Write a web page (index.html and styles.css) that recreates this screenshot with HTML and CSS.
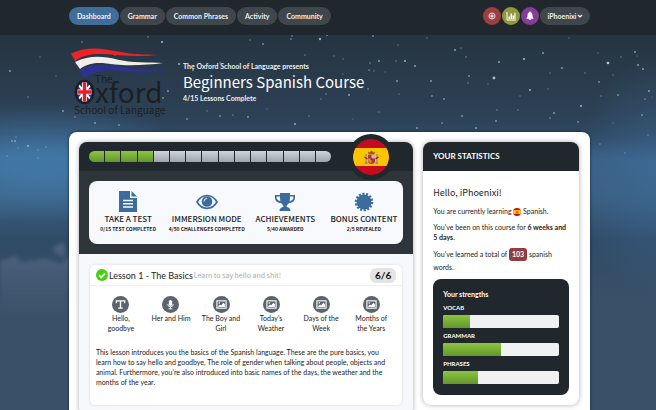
FILE: index.html
```html
<!DOCTYPE html>
<html lang="en">
<head>
<meta charset="utf-8">
<title>Beginners Spanish Course</title>
<link rel="stylesheet" href="styles.css">
</head>
<body>
<svg class="defs" width="0" height="0" aria-hidden="true">
  <symbol id="i-image" viewBox="0 0 12 12"><rect x="1" y="2" width="10" height="8" fill="none" stroke="#fff" stroke-width="1.2"/><circle cx="3.600" cy="4.400" r=".9" fill="#fff"/><path d="M2.500 8.800V7.500L4.500 6l1 1 2.600-2.800 1.600 1.500v3.100z" fill="#fff"/></symbol>
  <symbol id="i-spain" viewBox="0 0 36 36"><circle cx="18" cy="18" r="18" fill="#c60b1e"/><path d="M2.400 9h31.200a18 18 0 0 1 0 18H2.400a18 18 0 0 1 0-18z" fill="#ffc400"/><path d="M15 16h7v5.500a3.500 3.500 0 0 1-7 0z" fill="#b5303a"/><path d="M18.500 16H22v3.500h-3.500z" fill="#d9b0a8"/><path d="M15 19.500h3.500V24A3.500 3.500 0 0 1 15 21z" fill="#d88a2a"/><path d="M15 12.500l1.500 1 2-2 2 2 1.500-1-.6 3h-5.800z" fill="#a8502a"/><path d="M12.500 15h1.300v8.500h-1.300zM23.200 15h1.300v8.500h-1.300z" fill="#8f8f98"/><path d="M11.500 18l3 2M25.500 18l-3 2" stroke="#aa151b" stroke-width="1.200"/><circle cx="18.500" cy="20" r="1.100" fill="#2d4f94"/><path d="M11.800 24h2.700M22.500 24h2.700" stroke="#4a6a8a"/></symbol>
</svg>
<header class="topbar">
  <div class="wrap topbar-row">
    <nav class="nav">
      <a class="pill active" href="#">Dashboard</a>
      <a class="pill" href="#">Grammar</a>
      <a class="pill" href="#">Common Phrases</a>
      <a class="pill" href="#">Activity</a>
      <a class="pill" href="#">Community</a>
    </nav>
    <div class="tools">
      <button class="round red" aria-label="Goals"><svg viewBox="0 0 18 18"><circle cx="9" cy="9" r="3" fill="none" stroke="#f3e4e4" stroke-width="1"/><circle cx="9" cy="9" r="1.600" fill="#f3e4e4"/></svg></button>
      <button class="round olive" aria-label="Statistics"><svg viewBox="0 0 18 18"><path d="M5 5v8h9" fill="none" stroke="#fff"/><path d="M6.500 12V9.500H8V12zM8.500 12V6.500H10V12zM10.500 12V8.500H12V12zM12.300 12V5.800h1.200V12z" fill="#fff"/></svg></button>
      <button class="round purple" aria-label="Notifications"><svg viewBox="0 0 18 18"><path d="M9 5c2 .3 2.500 1.800 2.500 3.500 0 1.500.5 2.300 1.300 3.300H5.200c.8-1 1.300-1.800 1.300-3.300C6.500 6.800 7 5.300 9 5z" fill="#fff"/><path d="M9 4.500v2M7.800 12.200h2.400" stroke="#fff" stroke-width="1.200"/></svg></button>
      <button class="pill user">iPhoenixi<svg viewBox="0 0 6 6"><path d="M1 2l2 2 2-2" fill="none" stroke="#fff" stroke-width="1.200"/></svg></button>
    </div>
  </div>
</header>
<div class="sky">
  <svg class="clouds" viewBox="0 0 100 80" preserveAspectRatio="none" aria-hidden="true">
    <defs><linearGradient id="fade" x1="0" y1="0" x2="0" y2="1"><stop offset="0" stop-color="#566b84" stop-opacity=".75"/><stop offset=".9" stop-color="#566b84" stop-opacity="0"/></linearGradient></defs>
    <path d="M-5 24C2 20 5 24 8 21s10-4 12 2c5 3 9-2 15 0 6-3 15-2 19 0 5 0 6 5 10 1 5-5 16-10 40-12v68H-5z" fill="url(#fade)"/>
    <path d="M54 13c0-3 6-6 12-6v11c-6 2-9-2-12-5z" fill="#566b84" opacity=".7"/>
  </svg>
  <svg class="stars" id="stars" aria-hidden="true"></svg>
  <section class="wrap hero">
    <svg class="logo" viewBox="0 0 100 74" role="img" aria-label="The Oxford School of Language">
      <path d="M1 6.500C16-1 32 1 48 4.500S76 7 88 8C74 9.500 60 9 46 8 30 6.500 16 6 5 14z" fill="#ee2328"/>
      <path d="M5 15c14-7 28-6 42-2.500S80 15 93 16c-14 2-34 3-48 1.500S22 14 10 22z" fill="#efeeea"/>
      <path d="M9 23c11-5.500 25-6 39-3.500s34 4 48 3.800c-16 2.700-34 2.700-47 .7s-25 0-34.500 7z" fill="#2e3192"/>
      <text x="25" y="36" font-size="10">The</text>
      <ellipse cx="14.500" cy="45" rx="8.300" ry="10.500" fill="#fff" stroke="#1d1e22" stroke-width="3.400"/>
      <clipPath id="oval"><ellipse cx="14.500" cy="45" rx="7.300" ry="10"/></clipPath>
      <g clip-path="url(#oval)"><path d="M6 34h7v9H6zM16 34h8v9h-8zM6 47h7v9H6zM16 47h8v9h-8z" fill="#2b3990"/><path d="M6 35l17 20M23 35L6 55" stroke="#fff" stroke-width="2"/><path d="M14.500 34v22M5 45h19" stroke="#fff" stroke-width="5"/><path d="M14.500 34v22M5 45h19" stroke="#ed1c24" stroke-width="3.400"/></g>
      <text x="25" y="56" font-size="28">xford</text>
      <text x="4" y="67" font-size="10">School of Language</text>
    </svg>
    <div class="intro">
      <p class="kicker">The Oxford School of Language presents</p>
      <h1>Beginners Spanish Course</h1>
      <p class="kicker">4/15 Lessons Complete</p>
    </div>
  </section>
  <main class="wrap sheet">
    <section class="course card">
      <div class="course-head">
        <div class="steps" role="img" aria-label="4 of 15 lessons complete"><i class="on"></i><i class="on"></i><i class="on"></i><i class="on"></i><i></i><i></i><i></i><i></i><i></i><i></i><i></i><i></i><i></i><i></i><i></i></div>
        <svg class="flag" viewBox="0 0 36 36" role="img" aria-label="Spain"><use href="#i-spain"/></svg>
      </div>
      <div class="course-actions">
        <div class="actions">
          <a href="#"><svg viewBox="0 0 22 22"><path d="M2 0h11v7h7v14H2z"/><path d="M14.500 0L20 5.500h-5.500z"/><path d="M6 9.500h10M6 12.700h10M6 16h10" stroke="#f7f9fc" stroke-width="1.400"/></svg><b>TAKE A TEST</b><small>0/15 TEST COMPLETED</small></a>
          <a href="#"><svg viewBox="0 0 22 22"><path d="M1 11C6 2.300 16 2.300 21 11 16 19.500 6 19.500 1 11z" fill="none" stroke="#3c6c9e" stroke-width="1.700"/><circle cx="11" cy="10.500" r="5.300"/><path d="M8 10.500A3 3 0 0 1 11 7.500" fill="none" stroke="#f7f9fc"/></svg><b>IMMERSION MODE</b><small>4/50 CHALLENGES COMPLETED</small></a>
          <a href="#"><svg viewBox="0 0 22 22"><path d="M6 2h10v2h5v3c0 3-3 5-6 5-1 1.500-2.500 2-2.500 4 1.500 0 4 1 4 4h-11c0-3 2.500-4 4-4 0-2-1.500-2.500-2.500-4-3 0-6-2-6-5V4h5zM6 5.500H2.600V7c0 1.500 2 3 4 3.300C6 8.800 6 7 6 5.500zm10 0c0 1.500 0 3.300-.6 4.800 2-.3 4-1.800 4-3.300V5.500z" fill-rule="evenodd"/></svg><b>ACHIEVEMENTS</b><small>5/40 AWARDED</small></a>
          <a href="#"><svg viewBox="0 0 22 22"><circle cx="11" cy="11" r="7.500"/><circle cx="11" cy="11" r="8" fill="none" stroke="#3c6c9e" stroke-width="2.600" stroke-dasharray="2 1.590"/></svg><b>BONUS CONTENT</b><small>2/5 REVEALED</small></a>
        </div>
      </div>
      <div class="course-body">
        <article class="lesson">
          <header>
            <svg class="tick" viewBox="0 0 12 12"><circle cx="6" cy="6" r="6" fill="#45cf0c"/><path d="M3 6.200l2.200 2.200 3.900-4" fill="none" stroke="#fff" stroke-width="1.800"/></svg>
            <h2>Lesson 1 - The Basics</h2>
            <span class="sub">Learn to say hello and shit!</span>
            <span class="count">6/6</span>
          </header>
          <ul class="topics">
            <li><span class="dot"><svg viewBox="0 0 12 12"><path d="M1.500 4.500V2h9v2.500M6 2v7.500M3.500 10h5" fill="none" stroke="#fff" stroke-width="1.500"/></svg></span>Hello, goodbye</li>
            <li><span class="dot"><svg viewBox="0 0 12 12"><rect x="4.200" y="1" width="3.600" height="6.500" rx="1.800" fill="#fff"/><path d="M3 5.500a3 3 0 0 0 6 0M6 8.500v2M4 10.700h4" fill="none" stroke="#fff"/></svg></span>Her and Him</li>
            <li><span class="dot"><svg><use href="#i-image"/></svg></span>The Boy and Girl</li>
            <li><span class="dot"><svg><use href="#i-image"/></svg></span>Today's Weather</li>
            <li><span class="dot"><svg><use href="#i-image"/></svg></span>Days of the Week</li>
            <li><span class="dot"><svg><use href="#i-image"/></svg></span>Months of the Years</li>
          </ul>
          <p>This lesson introduces you the basics of the Spanish language. These are the pure basics, you learn how to say hello and goodbye, The role of gender when talking about people, objects and animal. Furthermore, you're also introduced into basic names of the days, the weather and the months of the year.</p>
        </article>
      </div>
    </section>
    <aside class="stats card">
      <h2>YOUR STATISTICS</h2>
      <div class="stats-body">
        <h3>Hello, iPhoenixi!</h3>
        <p>You are currently learning <svg class="mini" viewBox="0 0 36 36"><use href="#i-spain"/></svg> Spanish.</p>
        <p>You've been on this course for <strong>6 weeks and 5 days</strong>.</p>
        <p class="words">You've learned a total of <span class="badge">103</span> spanish words.</p>
        <div class="strengths">
          <h4>Your strengths</h4>
          <h5>VOCAB</h5><div class="bar"><i style="width:23%"></i></div>
          <h5>GRAMMAR</h5><div class="bar"><i style="width:50%"></i></div>
          <h5>PHRASES</h5><div class="bar"><i style="width:30%"></i></div>
        </div>
      </div>
    </aside>
  </main>
</div>
<script src="stars.js"></script>
</body>
</html>
```
FILE: stars.js
```js
// Each star is x, y, radius, opacity.
const stars = [
  [373,35,1,.6],[455,49,1,.8],[461,47,.8,.5],[379,60,1,.8],[396,60,.8,.6],[405,60,1.200,.8],[415,65,1,.8],[466,56,.8,.7],
  [499,61,1,.8],[524,58,1.200,.9],[543,52,1,.8],[608,62,1.500,1],[621,56,.9,.6],[635,51,1,.7],[638,64,1,.8],[643,68,1,.8],
  [562,67,1,.7],[494,77,1.600,.9],[530,89,1.200,.8],[469,75,1,.6],[468,82,.8,.6],[488,83,.8,.5],[431,80,1,.7],[397,80,1,.7],
  [399,93,.8,.5],[349,94,1,.8],[368,88,.8,.8],[432,95,1,.6],[444,98,1,.6],[599,81,1,.6],[601,95,.9,.5],[618,94,1,.6],
  [649,90,1,.8],[645,98,.8,.7],[581,105,1.200,.8],[642,114,1,.6],[554,112,1,.7],[550,117,.9,.7],[578,121,1,.6],[496,120,1,.7],
  [462,115,1,.7],[442,122,1,.5],[497,109,.9,.6],[518,109,.8,.5],[417,127,1,.7],[476,127,1,.7],[379,111,.9,.5],[353,118,.8,.4],
  [320,38,1.300,.8],[327,34,1,.7],[291,38,.9,.7],[263,43,1,.6],[250,39,.8,.6],[292,35,.8,.8],[162,41,1.200,.9],[148,36,.8,.7],
  [82,41,1,.4],[115,54,.8,.5],[132,63,.8,.6],[179,63,1.200,.8],[220,62,.9,.7],[305,54,.8,.6],[334,55,.8,.5],[10,70,1,.8],
  [40,56,.9,.4],[28,96,.8,.6],[56,75,.8,.5],[63,110,1,.7],[15,140,1,.7],[28,145,1.100,.8],[46,146,.8,.6],[75,116,1,.4],
  [95,122,1,.7],[119,124,1,.6],[295,123,1.100,.8],[248,116,1,.7],[233,114,.8,.6],[220,115,1,.6],[187,118,1,.6],[267,108,.8,.4],
  [325,136,1,.6],[207,110,.8,.6],[168,90,1,.7],[163,97,1,.6],[153,101,.9,.5],[189,86,.9,.6],[193,69,1,.8],[321,98,.9,.5],
  [309,115,.8,.6],[326,93,.8,.6],[598,52,.7,.4],[569,37,.8,.5],[427,37,.8,.5],[398,44,.8,.5],[370,62,.9,.6],[369,69,.9,.7],
  [374,70,.8,.5],[385,71,.7,.4],[343,58,.8,.5],[343,73,.7,.4],[637,55,.7,.4],[613,74,.8,.5],[585,72,.8,.6],[550,72,.7,.6],
  [548,88,.7,.5],[520,95,.7,.5],[613,122,.7,.4],[652,96,.6,.4],[7,155,.9,.5],[16,136,.8,.5],[12,140,1,.6],[18,147,.9,.5],
  [38,149,.8,.5],[38,157,.8,.5],[600,143,.9,.5],[625,152,.9,.5],[648,134,.8,.6]
];
document.getElementById("stars").innerHTML = stars
  .map(([x, y, r, o]) => `<circle cx="${(x / 656 * 100).toFixed(2)}%" cy="${y - 34}" r="${r * 0.9}" opacity="${o}"/>`)
  .join("");
```
FILE: styles.css
```css
* { box-sizing: border-box; margin: 0; padding: 0; }
body {
  font-family: Lato, "Noto Sans CJK JP", sans-serif;
  font-size: 7px;
  line-height: 10px;
  color: #222;
  background: #3a5068;
}
a { color: inherit; text-decoration: none; }
button { font: inherit; color: inherit; border: 0; }
.defs { position: absolute; }
.wrap { margin: 0 10% 0 10.5%; }

.topbar { background: #20282d; padding: 7px 0 10px; }
.topbar-row { display: flex; justify-content: space-between; }
.nav { display: flex; gap: 1px; }
.tools { display: flex; gap: 1px; }
.pill {
  display: flex; align-items: center; gap: 1px;
  height: 18px; padding: 0 8px; border-radius: 9px;
  background: #40474c; color: #eee; font-weight: 700;
}
.pill.active { background: #3f6d9c; }
.user { padding: 0 7px; }
.user svg { width: 6px; height: 6px; }
.round { width: 18px; height: 18px; border-radius: 50%; }
.round svg { display: block; width: 18px; height: 18px; }
.red { background: #9d3f41; }
.olive { background: #8f983c; }
.purple { background: #843c97; }

.sky {
  position: relative;
  min-height: calc(100vh - 35px);
  background:
    radial-gradient(ellipse 80px 120px at 100% 140px, #3f6f9a80, transparent),
    radial-gradient(ellipse 160px 60px at 6% 128px, #4480b0b0 20%, transparent),
    linear-gradient(#253440 0, #2d4156 80px, #2f4862 100px, #3a6289 125px, #3b5f82 160px, #304b67 205px, #3a5068 270px);
}
.stars, .clouds { position: absolute; left: 0; }
.stars { top: 0; width: 100%; height: 160px; fill: #a9cbe4; }
.clouds { top: 200px; width: 15%; height: 90px; filter: blur(2px); }

.hero { position: relative; display: flex; align-items: center; gap: 13px; height: 97px; color: #eee; }
.logo { width: 100px; height: 74px; margin-left: 1px; flex: none; fill: #1d1e22; font-family: "Noto Sans CJK JP", sans-serif; }
.intro { padding-bottom: 4px; }
.kicker { font-weight: 700; }
h1 { font: 400 15px/22px "Noto Sans CJK JP", sans-serif; color: #fff; }

.sheet {
  position: relative; display: flex; align-items: flex-start; gap: 10px;
  padding: 10px 11px 20px 10px; background: #fff; border-radius: 8px 8px 0 0;
  box-shadow: 0 0 3px #0f2033;
}
.card { border-radius: 8px; box-shadow: 0 0 5px #0005; background: #fff; }
.course { flex: 334 1 0; background: #f6f8fb; }
.course-head {
  display: flex; align-items: center; height: 29px; padding: 0 10px;
  background: #20282d; border-radius: 8px 8px 0 0;
}
.steps { display: flex; gap: 1px; flex: 1; margin-right: 72px; height: 11px; border-radius: 6px; overflow: hidden; }
.steps i { flex: 1; background: linear-gradient(#cfd4d8, #9ba5ac); }
.steps .on { background: linear-gradient(#8cc63e, #64962f); }
.flag { position: absolute; left: 53.5%; top: 2px; width: 46px; height: 46px; padding: 5px; background: #20282d; border-radius: 50%; }
.course-actions { padding: 10px; background: #2d353b; }
.actions {
  display: grid; grid-template-columns: repeat(4, 1fr); padding: 10px 0;
  background: #f7f9fc; border-radius: 8px; text-align: center; white-space: nowrap;
  font-family: "Noto Sans CJK JP", sans-serif;
}
.actions a { display: flex; flex-direction: column; align-items: center; }
.actions svg { width: 22px; height: 22px; fill: #3c6c9e; flex: none; }
.actions b { font-size: 8px; line-height: 11px; font-weight: 500; }
.actions small { font-size: 5px; line-height: 10px; font-weight: 700; }

.course-body { padding: 11px; }
.lesson { background: #fff; border-radius: 5px; box-shadow: 0 0 3px #0002; }
.lesson header { display: flex; align-items: center; gap: 1px; height: 21px; padding: 0 6px; border-bottom: 1px solid #eff2f5; }
.tick { width: 12px; height: 12px; }
.lesson h2 { font-size: 9px; line-height: 15px; font-weight: 400; }
.sub { font-family: "Noto Sans CJK JP", sans-serif; color: #aaa; }
.count { margin-left: auto; padding: 0 5px; border-radius: 6px; background: #e4e4e4; color: #111; font-size: 10px; line-height: 15px; font-weight: 700; }
.topics { list-style: none; display: grid; grid-template-columns: repeat(6, 1fr); padding: 10px 6px 14px; text-align: center; }
.topics li { padding: 0 5px; }
.dot { display: flex; align-items: center; justify-content: center; width: 17px; height: 17px; margin: 0 auto; border-radius: 50%; background: #5b646e; }
.dot svg { width: 11px; height: 11px; }
.lesson p { padding: 0 14px 18px 6px; }

.stats { flex: 156 1 0; }
.stats h2 { padding: 0 10px; background: #20282d; border-radius: 8px 8px 0 0; color: #fff; font-size: 8px; line-height: 29px; font-weight: 700; }
.stats-body { padding: 14px 10px 10px; }
h3 { margin-bottom: 6px; font: 400 9px/15px "Noto Sans CJK JP", sans-serif; }
.stats-body p { margin-bottom: 6px; }
.stats-body .words { line-height: 12px; }
.mini { width: 8px; height: 8px; vertical-align: middle; }
.badge { display: inline-block; padding: 0 3px; border-radius: 3px; background: #943b3d; color: #fff; font-weight: 700; line-height: 13px; }
.strengths { padding: 10px 10px 11px; background: #20282d; border-radius: 8px; color: #fff; }
h4 { font-size: 7px; font-weight: 700; line-height: 11px; }
h5 { font-size: 6px; font-weight: 700; line-height: 15px; }
.bar { height: 13px; border-radius: 2px; overflow: hidden; background: #f1f1f1; }
.bar i { display: block; height: 100%; background: linear-gradient(#8cc63e, #64962f); }
```
